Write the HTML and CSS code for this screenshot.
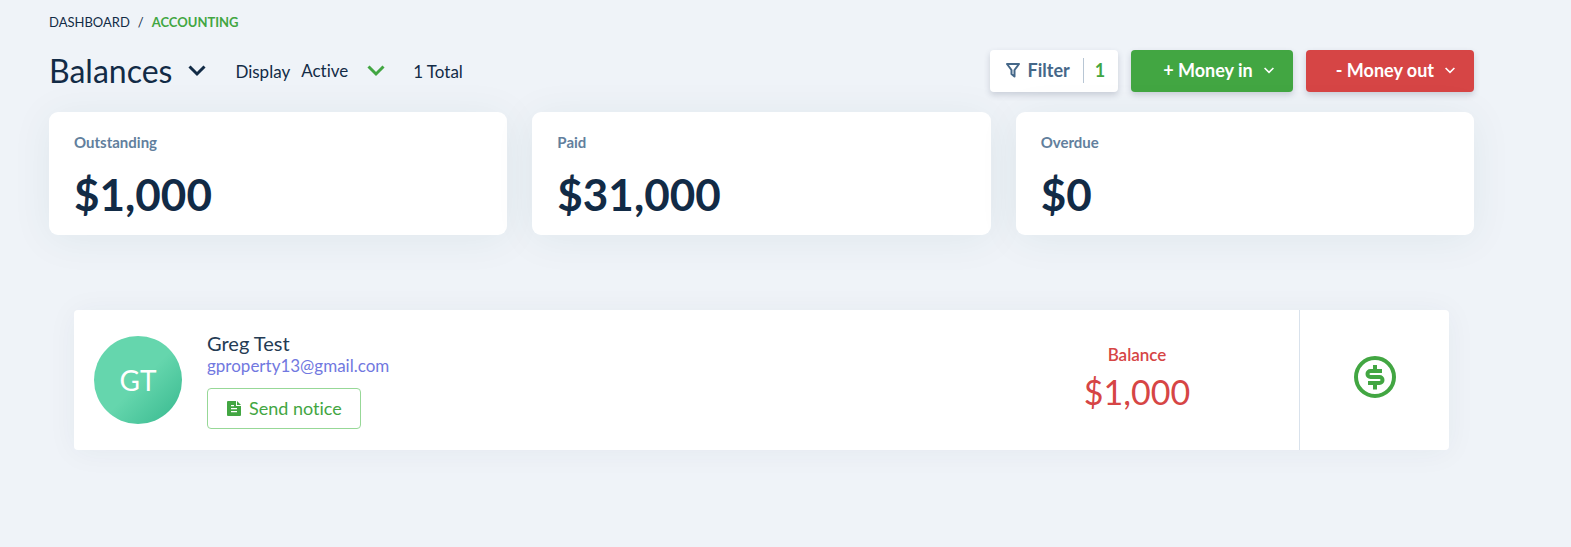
FILE: index.html
```html
<!DOCTYPE html>
<html lang="en">
<head>
<meta charset="utf-8">
<meta name="viewport" content="width=device-width, initial-scale=1">
<title>Balances</title>
<link rel="stylesheet" href="styles.css">
</head>
<body>
<main class="page">
  <nav class="breadcrumb" aria-label="Breadcrumb">
    <a class="crumb" href="#">DASHBOARD</a>
    <span class="crumb-sep">/</span>
    <a class="crumb crumb-current" href="#" aria-current="page">ACCOUNTING</a>
  </nav>

  <header class="toolbar">
    <div class="toolbar-left">
      <h1 class="title">
        <button class="title-button" type="button">Balances
          <svg class="chevron" width="18" height="12" viewBox="0 0 18 12" fill="none" stroke="currentColor" stroke-width="3" aria-hidden="true"><path d="M1.500 1.500 9 9l7.500-7.500"/></svg>
        </button>
      </h1>
      <div class="display">
        <label for="display">Display</label>
        <span class="select-wrap">
          <select class="select" id="display">
            <option>Active</option>
            <option>All</option>
          </select>
          <svg class="select-chevron" width="18" height="12" viewBox="0 0 18 12" fill="none" stroke="currentColor" stroke-width="3" aria-hidden="true"><path d="M1.500 1.500 9 9l7.500-7.500"/></svg>
        </span>
      </div>
      <span class="total">1 Total</span>
    </div>
    <div class="actions">
      <button class="btn btn-filter" type="button">
        <svg width="14" height="16" viewBox="0 0 14 16" fill="none" stroke="currentColor" stroke-width="2" stroke-linejoin="round" aria-hidden="true"><path d="M1 2h12L8.500 8v6.500L5.500 12V8z"/></svg>
        <span class="filter-label">Filter</span>
        <span class="filter-count">1</span>
      </button>
      <button class="btn btn-in" type="button">+ Money in
        <svg width="10" height="7" viewBox="0 0 10 7" fill="none" stroke="currentColor" stroke-width="1.600" aria-hidden="true"><path d="m.6 1 4.400 4.400L9.400 1"/></svg>
      </button>
      <button class="btn btn-out" type="button">- Money out
        <svg width="10" height="7" viewBox="0 0 10 7" fill="none" stroke="currentColor" stroke-width="1.600" aria-hidden="true"><path d="m.6 1 4.400 4.400L9.400 1"/></svg>
      </button>
    </div>
  </header>

  <section class="stats" aria-label="Totals">
    <article class="stat"><h2 class="stat-label">Outstanding</h2><p class="stat-value">$1,000</p></article>
    <article class="stat"><h2 class="stat-label">Paid</h2><p class="stat-value">$31,000</p></article>
    <article class="stat"><h2 class="stat-label">Overdue</h2><p class="stat-value">$0</p></article>
  </section>

  <article class="tenant">
    <div class="tenant-main">
      <span class="avatar">GT</span>
      <div class="person">
        <span class="person-name">Greg Test</span>
        <a class="person-mail" href="mailto:gproperty13@gmail.com">gproperty13@gmail.com</a>
        <button class="notice" type="button">
          <svg width="14" height="15" viewBox="0 0 14 15" aria-hidden="true"><path fill="currentColor" fill-rule="evenodd" d="M1 0h8v5h5v9a1 1 0 0 1-1 1H1a1 1 0 0 1-1-1V1a1 1 0 0 1 1-1zm3 4v1.300h3V4zm0 3v1.300h6V7zm0 3v1.300h6V10zM10 0l4 4h-4z"/></svg>
          Send notice
        </button>
      </div>
    </div>
    <div class="balance">
      <span class="balance-label">Balance</span>
      <span class="balance-value">$1,000</span>
    </div>
    <button class="pay" type="button" aria-label="Record payment">
      <svg width="42" height="42" viewBox="0 0 42 42" fill="none" stroke="currentColor" stroke-width="4" aria-hidden="true"><circle cx="21" cy="21" r="19"/><path d="M28 15H16.500a3 3 0 0 0-3 3v0a3 3 0 0 0 3 3h9a3 3 0 0 1 3 3v0a3 3 0 0 1-3 3H14M21 9v6M21 27v6.500"/></svg>
    </button>
  </article>
</main>
</body>
</html>
```
FILE: styles.css
```css
* {
  box-sizing: border-box;
}

body {
  margin: 0;
  min-height: 100vh;
  background: #eff3f8;
  color: #122b46;
  font-family: Lato, "Open Sans", sans-serif;
  font-size: 17px;
  font-variant-ligatures: none;
}

h1, h2, p {
  margin: 0;
  font-weight: 400;
}

button, select {
  font: inherit;
  font-variant-ligatures: none;
  color: inherit;
  background: none;
  border: 0;
  padding: 0;
  margin: 0;
  cursor: pointer;
}

a {
  color: inherit;
  text-decoration: none;
}

svg {
  flex: none;
  display: block;
}

.page {
  padding: 12px 97px 40px 49px;
}

.breadcrumb {
  display: flex;
  gap: 8px;
  font-size: 13px;
  line-height: 20px;
}

.crumb-current {
  color: #42a642;
  font-weight: 700;
}

.toolbar {
  display: flex;
  flex-wrap: wrap;
  justify-content: space-between;
  gap: 12px;
  margin-top: 18px;
}

.toolbar-left {
  display: flex;
  align-items: center;
}

.title-button {
  display: flex;
  align-items: center;
  gap: 16px;
  font-size: 32px;
  line-height: 40px;
}

.display {
  display: flex;
  align-items: center;
  gap: 11px;
  margin-left: 29px;
}

.select-wrap {
  display: grid;
  align-items: center;
  width: 84px;
}

.select {
  grid-area: 1 / 1;
  appearance: none;
  line-height: 24px;
}

.select-chevron {
  grid-area: 1 / 1;
  justify-self: end;
  color: #42a642;
  pointer-events: none;
}

.total {
  margin-left: 28px;
}

.actions {
  display: flex;
  gap: 13px;
}

.btn {
  display: flex;
  align-items: center;
  height: 42px;
  border-radius: 4px;
  box-shadow: 0 3px 6px rgba(50, 60, 90, 0.2);
  font-size: 18px;
  font-weight: 700;
  color: #fff;
}

.btn-filter {
  padding: 0 13px 2px 16px;
  background: #fff;
  color: #456788;
}

.filter-label {
  margin: 0 13px 0 8px;
}

.filter-count {
  border-left: 1px solid #b8c6d4;
  padding-left: 11px;
  line-height: 25px;
  color: #42a642;
}

.btn-in,
.btn-out {
  gap: 11px;
  padding: 0 19px 2px 30px;
}

.btn-in {
  padding-left: 32px;
  background: #42a642;
}

.btn-out {
  background: #d64545;
}

.stats {
  display: grid;
  grid-template-columns: repeat(3, 1fr);
  gap: 25px;
  margin-top: 20px;
}

.stat {
  padding: 20px 25px 13px;
  border-radius: 9px;
  background: #fff;
  box-shadow: 0 4px 40px rgba(30, 80, 80, 0.07);
}

.stat-label {
  color: #627f9d;
  font-size: 15px;
  line-height: 20px;
  font-weight: 700;
}

.stat-value {
  margin-top: 14px;
  font-size: 44px;
  line-height: 56px;
  font-weight: 700;
}

.tenant {
  display: flex;
  margin: 75px 25px 0;
  min-height: 140px;
  border-radius: 4px;
  background: #fff;
  box-shadow: 0 2px 30px rgba(30, 50, 80, 0.05);
}

.tenant-main {
  flex: 1;
  display: flex;
  align-items: center;
  gap: 25px;
  padding-left: 20px;
}

.avatar {
  display: grid;
  place-items: center;
  flex: none;
  width: 88px;
  height: 88px;
  border-radius: 50%;
  background: linear-gradient(135deg, #65d6ad 52%, #3ebd93 92%);
  color: #fff;
  font-size: 28px;
}

.person {
  display: flex;
  flex-direction: column;
  align-items: flex-start;
}

.person-name {
  color: #243b53;
  font-size: 20px;
  line-height: 24px;
}

.person-mail {
  color: #7178e0;
  font-size: 17px;
  line-height: 22px;
}

.notice {
  display: flex;
  align-items: center;
  gap: 8px;
  height: 41px;
  margin-top: 11px;
  padding: 0 18px 1px 19px;
  border: 1px solid #97d897;
  border-radius: 4px;
  color: #42a642;
  font-size: 18px;
}

.balance {
  display: flex;
  flex-direction: column;
  justify-content: center;
  align-items: center;
  width: 324px;
  color: #d64545;
}

.balance-label {
  font-size: 17px;
  line-height: 22px;
  font-weight: 600;
}

.balance-value {
  margin-top: 2px;
  font-size: 34px;
  line-height: 48px;
}

.pay {
  display: grid;
  place-items: center;
  width: 150px;
  padding-bottom: 6px;
  border-left: 1px solid #d9e2ec;
  color: #42a642;
}
```
